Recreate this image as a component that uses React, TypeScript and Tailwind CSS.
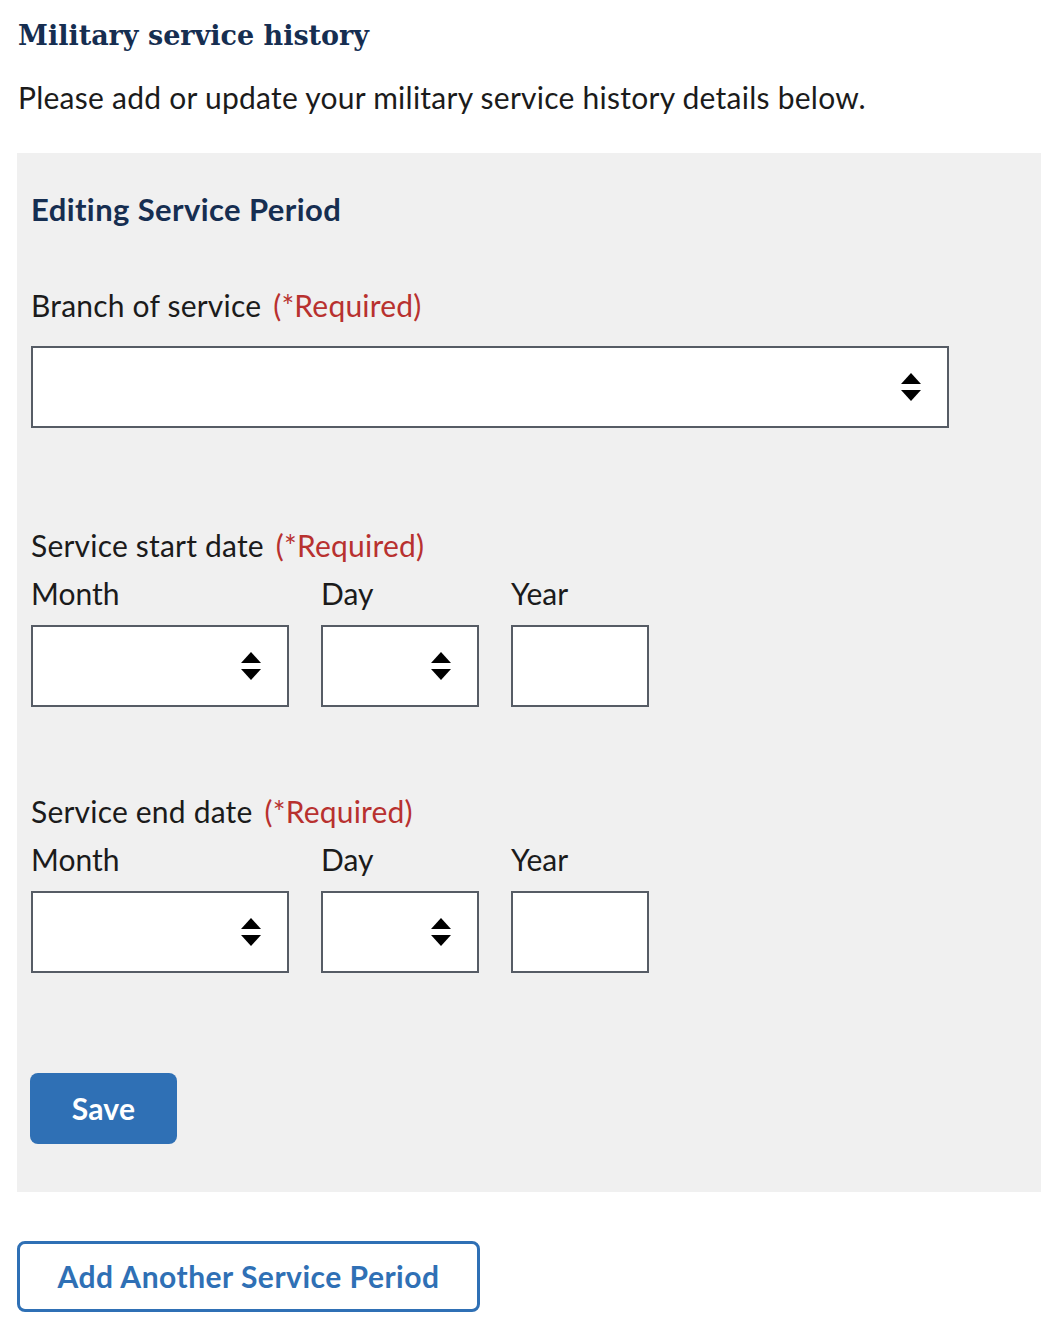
import React from "react";

const sans = "font-['Lato','Open_Sans',sans-serif]";

function Arrows() {
  return (
    <svg width="20" height="28" viewBox="0 0 20 28" aria-hidden="true">
      <polygon points="10,0 20,11 0,11" fill="#000" />
      <polygon points="0,17 20,17 10,28" fill="#000" />
    </svg>
  );
}

function SelectBox({ className }: { className: string }) {
  return (
    <div
      className={`flex h-[82px] items-center justify-end border-2 border-[#565c65] bg-white pr-[26px] ${className}`}
    >
      <Arrows />
    </div>
  );
}

function Label({ text }: { text: string }) {
  return (
    <div className="text-[30px] leading-[40px] tracking-[0.2px] text-[#1b1b1b]">
      {text}
      <span className="ml-[12px] text-[#b8312f]">(*Required)</span>
    </div>
  );
}

function DateField({ label }: { label: string }) {
  return (
    <div>
      <Label text={label} />
      <div className="mt-[8px] flex gap-[32px]">
        <div className="w-[258px]">
          <div className="text-[30px] leading-[40px] text-[#1b1b1b]">Month</div>
          <SelectBox className="mt-[12px] w-[258px]" />
        </div>
        <div className="w-[158px]">
          <div className="text-[30px] leading-[40px] text-[#1b1b1b]">Day</div>
          <SelectBox className="mt-[12px] w-[158px]" />
        </div>
        <div className="w-[138px]">
          <div className="text-[30px] leading-[40px] text-[#1b1b1b]">Year</div>
          <div className="mt-[12px] h-[82px] w-[138px] border-2 border-[#565c65] bg-white" />
        </div>
      </div>
    </div>
  );
}

export default function App() {
  return (
    <div className={`min-h-[1334px] bg-white px-[17px] pt-[14px] ${sans}`}>
      <h1 className="pl-px font-['DejaVu_Serif',serif] text-[27px] font-bold leading-[44px] text-[#162e51]">
        Military service history
      </h1>
      <p className="mt-[19px] pl-px text-[30px] leading-[40px] tracking-[0.25px] text-[#1b1b1b]">
        Please add or update your military service history details below.
      </p>

      <div className="mt-[36px] w-[1024px] bg-[#f0f0f0] px-[14px] pb-[48px] pt-[36px]">
        <h2 className="text-[31px] font-bold leading-[40px] tracking-[0.4px] text-[#162e51]">
          Editing Service Period
        </h2>

        <div className="mt-[56px]">
          <Label text="Branch of service" />
          <SelectBox className="mt-[21px] w-[918px]" />
        </div>

        <div className="mt-[97px]">
          <DateField label="Service start date" />
        </div>

        <div className="mt-[84px]">
          <DateField label="Service end date" />
        </div>

        <button
          type="button"
          className="-ml-px mt-[100px] h-[71px] w-[147px] rounded-[8px] bg-[#2f70b5] text-[30px] font-bold tracking-[0.3px] text-white"
        >
          Save
        </button>
      </div>

      <button
        type="button"
        className="mt-[49px] h-[71px] w-[463px] rounded-[8px] border-[3px] border-[#2f70b5] bg-white text-[30px] font-bold tracking-[0.5px] text-[#2f70b5]"
      >
        Add Another Service Period
      </button>
    </div>
  );
}
